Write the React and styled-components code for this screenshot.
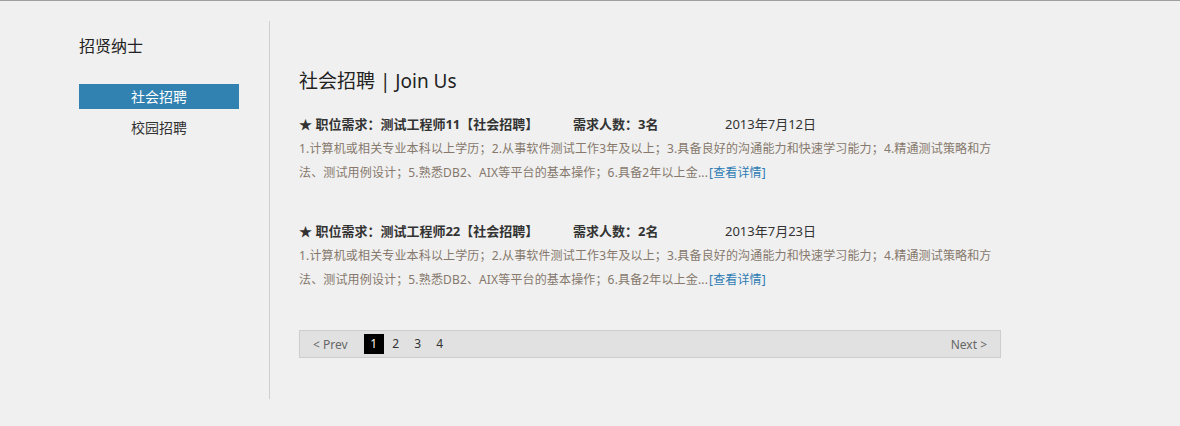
import React, { useState } from "react";
import styled, { createGlobalStyle } from "styled-components";

const GlobalStyle = createGlobalStyle`
  html, body {
    margin: 0;
    padding: 0;
    background: #f0f0f0;
  }
  body {
    font-family: "Segoe UI", "Noto Sans", "Noto Sans CJK SC", sans-serif;
    border-top: 1px solid #a0a0a0;
    min-height: 425px;
  }
`;

const jobs = [
  {
    id: 1,
    title: "测试工程师11",
    count: 3,
    date: "2013年7月12日",
  },
  {
    id: 2,
    title: "测试工程师22",
    count: 2,
    date: "2013年7月23日",
  },
];

const summary =
  "1.计算机或相关专业本科以上学历；2.从事软件测试工作3年及以上；3.具备良好的沟通能力和快速学习能力；4.精通测试策略和方法、测试用例设计；5.熟悉DB2、AIX等平台的基本操作；6.具备2年以上金...";

const App = () => {
  const [menu, setMenu] = useState("social");
  const [page, setPage] = useState(1);

  return (
    <>
      <GlobalStyle />
      <Wrapper>
        <SideBar>
          <SideTitle>招贤纳士</SideTitle>
          <MenuList>
            <MenuItem active={menu === "social"} onClick={() => setMenu("social")}>
              社会招聘
            </MenuItem>
            <MenuItem active={menu === "campus"} onClick={() => setMenu("campus")}>
              校园招聘
            </MenuItem>
          </MenuList>
        </SideBar>
        <Content>
          <PageTitle>社会招聘 | Join Us</PageTitle>
          {jobs.map((job) => (
            <JobItem key={job.id}>
              <JobHead>
                <HeadName>★ 职位需求：{job.title}【社会招聘】</HeadName>
                <HeadCount>需求人数：{job.count}名</HeadCount>
                <HeadDate>{job.date}</HeadDate>
              </JobHead>
              <JobDesc>
                {summary}
                <MoreLink href="#">[查看详情]</MoreLink>
              </JobDesc>
            </JobItem>
          ))}
          <Pager>
            <PagerLeft>
              <PrevBtn>&lt; Prev</PrevBtn>
              {[1, 2, 3, 4].map((n) => (
                <PageNum key={n} active={page === n} onClick={() => setPage(n)}>
                  {n}
                </PageNum>
              ))}
            </PagerLeft>
            <NextBtn>Next &gt;</NextBtn>
          </Pager>
        </Content>
      </Wrapper>
    </>
  );
};

export default App;

const Wrapper = styled.div`
  display: flex;
  padding: 20px 0 0 79px;
`;

const SideBar = styled.div`
  flex-shrink: 0;
  width: 191px;
  padding: 14px 30px 0 0;
  border-right: 1px solid #cfcfcf;
  box-sizing: border-box;
  height: 378px;
`;

const SideTitle = styled.h3`
  margin: 0;
  font-size: 16px;
  font-weight: normal;
  line-height: 22px;
  color: #222;
`;

const MenuList = styled.div`
  margin-top: 27px;
  width: 160px;
`;

const MenuItem = styled.div`
  height: 25px;
  line-height: 25px;
  margin-bottom: 6px;
  text-align: center;
  font-size: 14px;
  cursor: pointer;
  color: ${(p) => (p.active ? "#fff" : "#333")};
  background: ${(p) => (p.active ? "#3181b1" : "transparent")};
`;

const Content = styled.div`
  flex-shrink: 0;
  width: 702px;
  padding: 45px 0 0 29px;
`;

const PageTitle = styled.h2`
  margin: 0 0 16px;
  font-size: 19px;
  font-weight: normal;
  line-height: 30px;
  color: #222;
`;

const JobItem = styled.div`
  margin-bottom: 34px;
`;

const JobHead = styled.div`
  display: flex;
  font-size: 13px;
  line-height: 24px;
  color: #333;
`;

const HeadName = styled.span`
  width: 274px;
  font-weight: bold;
`;

const HeadCount = styled.span`
  width: 152px;
  font-weight: bold;
`;

const HeadDate = styled.span`
  font-size: 13px;
`;

const JobDesc = styled.p`
  margin: 1px 0 0;
  font-size: 12px;
  line-height: 24px;
  letter-spacing: 0.15px;
  color: #86786c;
`;

const MoreLink = styled.a`
  margin-left: 1px;
  color: #2d7bb4;
  text-decoration: none;
  :hover {
    text-decoration: underline;
  }
`;

const Pager = styled.div`
  margin-top: 38px;
  height: 28px;
  box-sizing: border-box;
  border: 1px solid #cdcdcd;
  background: #e1e1e1;
  display: flex;
  align-items: center;
  justify-content: space-between;
  padding: 0 13px;
  font-size: 12px;
  color: #555;
`;

const PagerLeft = styled.div`
  display: flex;
  align-items: center;
`;

const PrevBtn = styled.span`
  margin-right: 16px;
  color: #666;
  cursor: pointer;
`;

const PageNum = styled.span`
  width: 20px;
  height: 20px;
  line-height: 20px;
  margin-right: 2px;
  text-align: center;
  cursor: pointer;
  color: ${(p) => (p.active ? "#fdf3e0" : "#333")};
  background: ${(p) => (p.active ? "#000" : "transparent")};
`;

const NextBtn = styled.span`
  color: #666;
  cursor: pointer;
`;
